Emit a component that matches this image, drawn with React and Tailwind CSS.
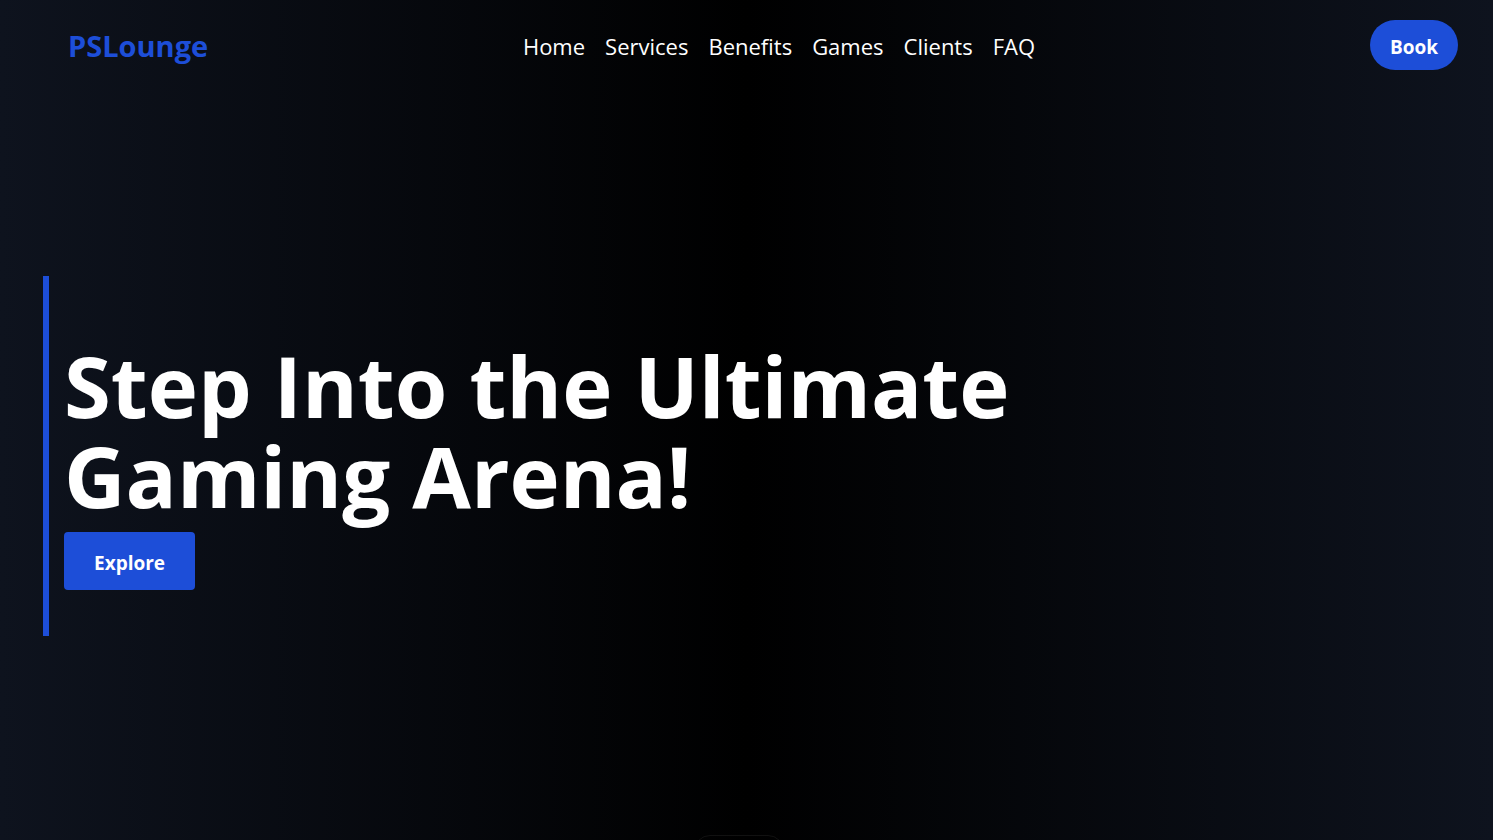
const links = ["Home", "Services", "Benefits", "Games", "Clients", "FAQ"];

export default function App() {
  return (
    <div className="h-screen overflow-hidden bg-linear-to-r/srgb from-[#0e131e] via-black to-[#0e131e] font-['Open_Sans',sans-serif] text-white">
      <header className="grid h-[90px] grid-cols-[1fr_auto_1fr] items-center pr-[35px] pl-[68px]">
        <a href="#home" className="pt-0.5 text-[29px] font-bold text-[#1d4ed8]">PSLounge</a>
        <nav className="flex gap-5 pt-0.5 pl-8 text-[22px]">
          {links.map((l) => (
            <a key={l} href={`#${l.toLowerCase()}`}>{l}</a>
          ))}
        </nav>
        <button className="h-[50px] justify-self-end rounded-full bg-[#1d4ed8] px-5 pt-1 text-[19px] font-bold">Book</button>
      </header>
      <main>
        <section className="flex h-[calc(100vh-95px)] items-center pb-[13px] pl-[43px]">
          <div className="flex min-h-[360px] max-w-[1100px] flex-col items-start justify-center border-l-[6px] border-[#1d4ed8] pt-[18px] pl-[15px]">
            <h1 className="mb-3 text-[85px] leading-[90px] font-bold">Step Into the Ultimate Gaming Arena!</h1>
            <button className="h-[58px] rounded bg-[#1d4ed8] px-[30px] pt-1 text-[19px] font-bold">Explore</button>
          </div>
        </section>
        <div className="mx-auto h-10 w-[90px] -translate-x-2 rounded-2xl border border-[#111111]" />
      </main>
    </div>
  );
}
